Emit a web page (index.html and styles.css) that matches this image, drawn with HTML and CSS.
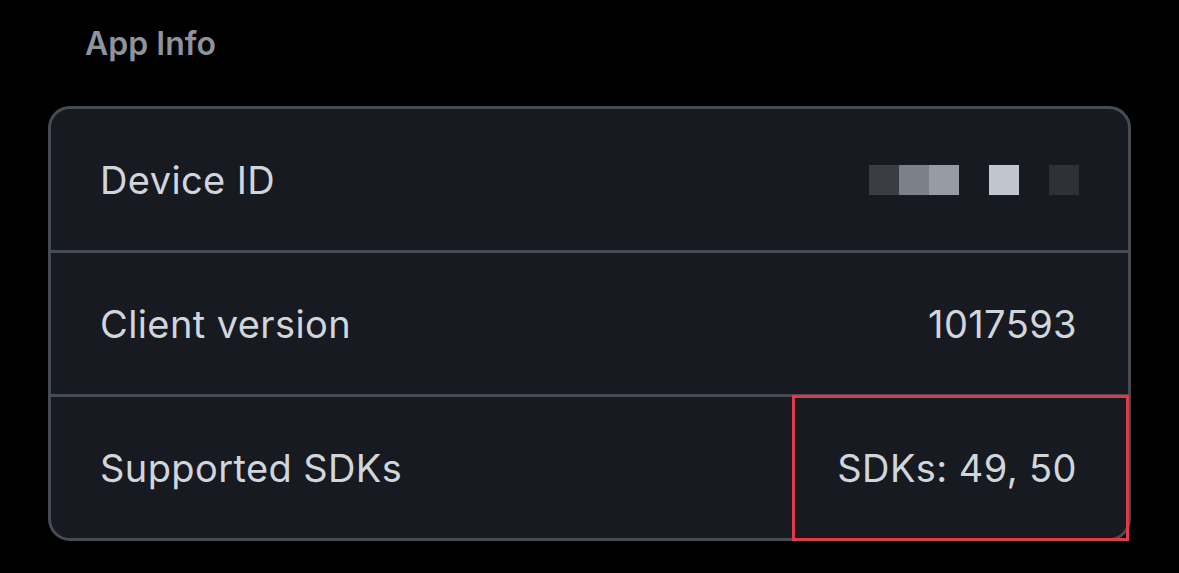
FILE: index.html
```html
<!DOCTYPE html>
<html>
<head>
<meta charset="utf-8">
<link rel="stylesheet" href="styles.css">
</head>
<body>
<div class="page">
  <h2 class="section-title">App Info</h2>
  <div class="card">
    <div class="row">
      <span class="label">Device ID</span>
      <span class="pixels">
        <i class="px p1"></i><i class="px p2"></i><i class="px p3"></i><i class="px gap"></i><i class="px p4"></i><i class="px gap"></i><i class="px p5"></i>
      </span>
    </div>
    <div class="row">
      <span class="label">Client version</span>
      <span class="value">1017593</span>
    </div>
    <div class="row">
      <span class="label">Supported SDKs</span>
      <span class="value">SDKs: 49, 50</span>
    </div>
    <div class="highlight"></div>
  </div>
</div>
</body>
</html>
```

FILE: styles.css
```css
html, body {
  margin: 0;
  padding: 0;
  background: #000;
}
.page {
  width: 1179px;
  height: 573px;
  font-family: Inter, "Noto Sans", sans-serif;
  padding-left: 48px;
  padding-top: 25px;
  box-sizing: border-box;
}
.section-title {
  margin: 0 0 43px 37px;
  font-size: 32px;
  font-weight: 600;
  line-height: 38px;
  color: #8e939c;
}
.card {
  position: relative;
  width: 1083px;
  box-sizing: border-box;
  border: 3px solid #474b53;
  border-radius: 22px;
  background: #171a21;
}
.row {
  display: flex;
  align-items: center;
  justify-content: space-between;
  height: 141px;
  padding: 0 51px 0 49px;
  box-sizing: content-box;
}
.row + .row {
  border-top: 3px solid #474b53;
}
.label, .value {
  font-size: 38px;
  color: #d1d6dd;
  letter-spacing: 0.4px;
}
.pixels {
  display: flex;
  margin-right: -2px;
}
.px {
  display: block;
  width: 30px;
  height: 30px;
}
.p1 { background: #3a3d42; }
.p2 { background: #7c8089; }
.p3 { background: #979ba3; }
.p4 { background: #c0c6ce; }
.p5 { background: #2e3136; }
.gap { background: transparent; }
.highlight {
  position: absolute;
  left: 741px;
  top: 286px;
  width: 337px;
  height: 146px;
  box-sizing: border-box;
  border: 3px solid #e1384a;
}
```
